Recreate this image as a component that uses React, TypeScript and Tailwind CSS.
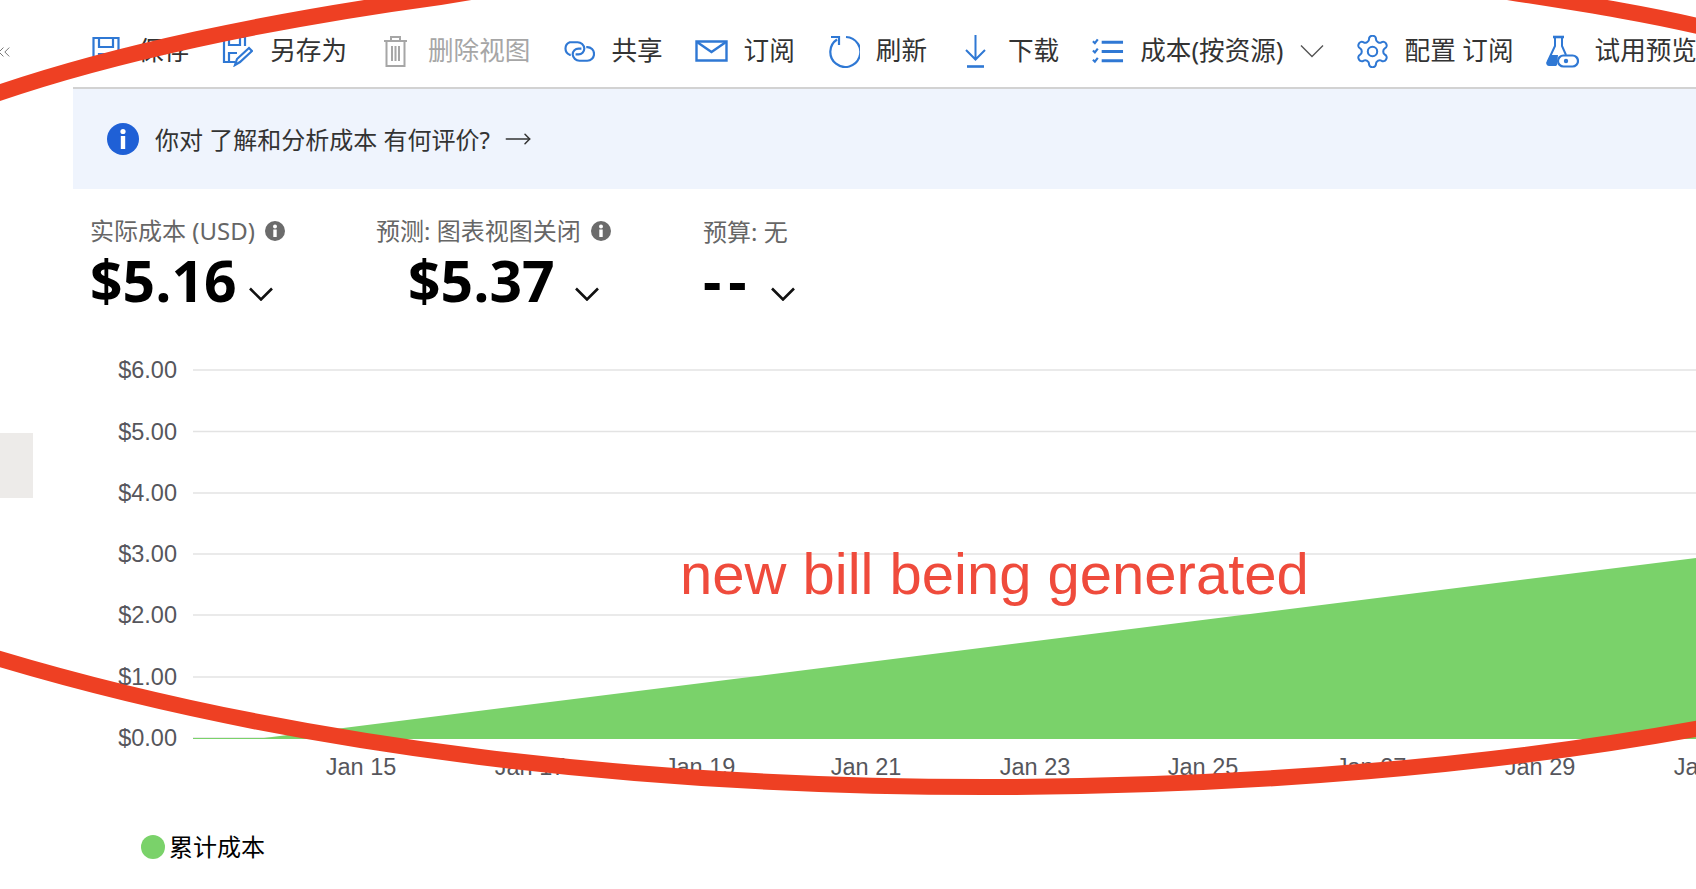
import React from 'react';
import { ChevronsLeft, MoveRight } from 'lucide-react';

const blue = '#2f78d4';

function SaveIcon() {
  return (
    <svg width="28" height="32" viewBox="0 0 28 32" fill="none" stroke={blue} strokeWidth="2.2">
      <path d="M1.5 3h25v26h-25z" />
      <path d="M7 3v9h14V3" />
      <path d="M7 29v-10h14v10" />
    </svg>
  );
}

function SaveAsIcon() {
  return (
    <svg width="31" height="32" viewBox="0 0 31 32" fill="none" stroke={blue} strokeWidth="2.2">
      <path d="M13 27H2V2h21v9" />
      <path d="M7 2v8h11V2" />
      <path d="M7 27v-9h8" />
      <path d="M13 30l2-6 12-11 3 3-12 11z" />
    </svg>
  );
}

function TrashIcon() {
  return (
    <svg width="25" height="33" viewBox="0 0 25 33" fill="none" stroke="#a6a6a6" strokeWidth="2">
      <path d="M1 6h23M8 6V2h9v4M3.5 6v25h18V6M9 11v15M12.5 11v15M16 11v15" />
    </svg>
  );
}

function LinkIcon() {
  return (
    <svg width="34" height="26" viewBox="0 0 34 26" fill="none" stroke={blue} strokeWidth="2.2">
      <path d="M9 17H8A7 7 0 0 1 8 4h8a7 7 0 0 1 7 6.5 6 6 0 0 1-6 6h-3" />
      <path d="M25 9h1a7 7 0 0 1 0 14h-8a7 7 0 0 1-7-6.5 6 6 0 0 1 6-6h3" />
    </svg>
  );
}

function MailIcon() {
  return (
    <svg width="33" height="22" viewBox="0 0 33 22" fill="none" stroke={blue} strokeWidth="2.4">
      <path d="M1.5 1.5h30v19h-30z" />
      <path d="M2 2l14.500 10L31 2" />
    </svg>
  );
}

function RefreshIcon() {
  return (
    <svg width="33" height="34" viewBox="0 0 33 34" fill="none" stroke={blue} strokeWidth="2.2">
      <path d="M10 5.500A15 15 0 1 0 19 3" />
      <path d="M4 3h8v8" />
    </svg>
  );
}

function DownloadIcon() {
  return (
    <svg width="23" height="34" viewBox="0 0 23 34" fill="none" stroke={blue} strokeWidth="2">
      <path d="M11.500 1v24M2 16l9.500 9.500L21 16" />
      <path strokeWidth="2.600" d="M3 32.500h17" />
    </svg>
  );
}

function ListIcon() {
  return (
    <svg width="34" height="28" viewBox="0 0 34 28" fill="none" stroke={blue}>
      <path strokeWidth="3" d="M11 5h22M11 14.500h22M11 24h22" />
      <path strokeWidth="2.200" d="M2 4l2 2 3-4M2 13.500l2 2 3-4M2 23l2 2 3-4" />
    </svg>
  );
}

function GearIcon() {
  return (
    <svg width="33" height="33" viewBox="1.500 1.500 21 21" fill="none" stroke={blue} strokeWidth="1.300" strokeLinejoin="round">
      <path d="M12.220 2h-.440a2 2 0 0 0-2 2v.180a2 2 0 0 1-1 1.730l-.430.250a2 2 0 0 1-2 0l-.150-.080a2 2 0 0 0-2.730.730l-.220.380a2 2 0 0 0 .730 2.730l.150.100a2 2 0 0 1 1 1.720v.510a2 2 0 0 1-1 1.740l-.150.090a2 2 0 0 0-.730 2.730l.220.380a2 2 0 0 0 2.730.730l.150-.080a2 2 0 0 1 2 0l.430.250a2 2 0 0 1 1 1.730V20a2 2 0 0 0 2 2h.440a2 2 0 0 0 2-2v-.180a2 2 0 0 1 1-1.730l.430-.250a2 2 0 0 1 2 0l.150.080a2 2 0 0 0 2.730-.730l.220-.390a2 2 0 0 0-.730-2.730l-.150-.080a2 2 0 0 1-1-1.740v-.500a2 2 0 0 1 1-1.740l.150-.090a2 2 0 0 0 .730-2.730l-.220-.380a2 2 0 0 0-2.730-.730l-.150.080a2 2 0 0 1-2 0l-.430-.250a2 2 0 0 1-1-1.730V4a2 2 0 0 0-2-2z" />
      <circle cx="12" cy="12" r="3" />
    </svg>
  );
}

function FlaskIcon() {
  return (
    <svg width="33" height="33" viewBox="0 0 33 33" fill="none" stroke={blue} strokeWidth="2">
      <path strokeWidth="2.600" d="M7 2h11" />
      <path d="M9 2v9L1.500 27a2 2 0 0 0 2 3h7M16 2v9l4 9" />
      <path fill={blue} stroke="none" d="M5 20h7l-1 10H3a2.500 2.500 0 0 1-2-3z" />
      <rect x="12" y="20.500" width="20" height="11" rx="5.500" fill="#fff" strokeWidth="2.200" />
      <circle cx="20" cy="26" r="2.200" fill={blue} stroke="none" />
    </svg>
  );
}

function InfoDot() {
  return (
    <svg width="20" height="20" viewBox="0 0 20 20" className="shrink-0">
      <circle cx="10" cy="10" r="10" fill="#6b6b6b" />
      <rect x="8.300" y="8.500" width="3.400" height="7.500" fill="#fff" />
      <circle cx="10" cy="5.500" r="2" fill="#fff" />
    </svg>
  );
}

// wide thin chevron used in the toolbar and next to the totals
function Caret({ color, weight }: { color: string; weight: number }) {
  return (
    <svg width="24" height="14" viewBox="0 0 24 14" fill="none" stroke={color} strokeWidth={weight} className="shrink-0">
      <path d="M1 1.500l11 11 11-11" />
    </svg>
  );
}

const toolbarItems = [
  { label: '保存', icon: <SaveIcon /> },
  { label: '另存为', icon: <SaveAsIcon /> },
  { label: '删除视图', icon: <TrashIcon />, disabled: true },
  { label: '共享', icon: <LinkIcon /> },
  { label: '订阅', icon: <MailIcon /> },
  { label: '刷新', icon: <RefreshIcon /> },
  { label: '下载', icon: <DownloadIcon /> },
  { label: '成本(按资源)', icon: <ListIcon />, caret: true },
  { label: '配置 订阅', icon: <GearIcon /> },
  { label: '试用预览', icon: <FlaskIcon /> },
];

const yTicks = [
  { label: '$6.00', y: 370 },
  { label: '$5.00', y: 431.5 },
  { label: '$4.00', y: 493 },
  { label: '$3.00', y: 554 },
  { label: '$2.00', y: 615 },
  { label: '$1.00', y: 677 },
  { label: '$0.00', y: 738 },
];

const xTicks = [
  { label: 'Jan 15', x: 361 },
  { label: 'Jan 17', x: 530 },
  { label: 'Jan 19', x: 700 },
  { label: 'Jan 21', x: 866 },
  { label: 'Jan 23', x: 1035 },
  { label: 'Jan 25', x: 1203 },
  { label: 'Jan 27', x: 1371 },
  { label: 'Jan 29', x: 1540 },
  { label: 'Jan 31', x: 1709 },
];

function Chart() {
  return (
    <svg width="1623" height="440" viewBox="73 350 1623 440" className="block">
      {yTicks.map((t) => (
        <g key={t.label}>
          <line x1="193" x2="1696" y1={t.y} y2={t.y} stroke="#e3e3e3" strokeWidth="1.500" />
          <text x="177" y={t.y + 8} textAnchor="end" fill="#56565c" fontSize="23.500" fontFamily="'Liberation Sans', sans-serif">
            {t.label}
          </text>
        </g>
      ))}
      <path d="M193 738L264 738L1696 558V739H193Z" fill="#7ad26a" />
      {xTicks.map((t) => (
        <text key={t.label} x={t.x} y="775" textAnchor="middle" fill="#56565c" fontSize="23.500" fontFamily="'Liberation Sans', sans-serif">
          {t.label}
        </text>
      ))}
    </svg>
  );
}

export default function App() {
  const cjk = "font-['Noto_Sans','Noto_Sans_CJK_SC',sans-serif]";
  return (
    <div className={`relative flex h-[889px] w-[1696px] overflow-hidden bg-white ${cjk}`}>
      {/* left nav rail, cut off in the screenshot */}
      <div className="w-[73px] shrink-0">
        <ChevronsLeft className="mt-[42px] -ml-[6px] h-5 w-5 text-[#777]" strokeWidth={1.2} />
        <div className="mt-[371px] h-[65px] w-[33px] bg-[#edebe9]" />
      </div>

      <div className="min-w-0 flex-1">
        <div className="flex h-[89px] items-center gap-[32px] overflow-hidden whitespace-nowrap border-b-2 border-[#d2d2d2] pl-[16px] pt-[15px]">
          {toolbarItems.map((item) => (
            <div key={item.label} className="flex shrink-0 items-center gap-[16px]">
              <span className="flex w-[33px] justify-center">{item.icon}</span>
              <span className={`text-[25.6px] leading-[34px] ${item.disabled ? 'text-[#a6a6a6]' : 'text-[#333]'}`}>
                {item.label}
              </span>
              {item.caret && <Caret color="#555" weight={1.4} />}
            </div>
          ))}
        </div>

        <div className="flex h-[100px] items-center bg-[#eff4fd] pl-[34px]">
          <svg width="32" height="32" viewBox="0 0 32 32" className="shrink-0">
            <circle cx="16" cy="16" r="16" fill="#1f60d6" />
            <rect x="13.800" y="13" width="4.400" height="13" fill="#fff" />
            <circle cx="16" cy="8.500" r="2.600" fill="#fff" />
          </svg>
          <span className="ml-[16px] pt-[2px] text-[24px] text-[#333]">你对 了解和分析成本 有何评价?</span>
          <MoveRight className="ml-[14px] h-[28px] w-[28px] text-[#333]" strokeWidth={1.3} />
        </div>

        <div className="flex h-[161px] items-start pl-[17px] pt-[27px]">
          <div className="w-[286px]">
            <div className="flex items-center gap-[10px] text-[24px] leading-[30px] text-[#666]">
              实际成本 (USD) <InfoDot />
            </div>
            <div className="flex items-center pt-[1px] text-black">
              <span className="text-[57px] leading-[66px] font-bold font-['Open_Sans',sans-serif]">$5.16</span>
              <span className="mt-[28px] ml-[12px]"><Caret color="#111" weight={2.6} /></span>
            </div>
          </div>
          <div className="w-[327px]">
            <div className="flex items-center gap-[10px] text-[24px] leading-[30px] text-[#666]">
              预测: 图表视图关闭 <InfoDot />
            </div>
            <div className="flex items-center pl-[32px] pt-[1px] text-black">
              <span className="text-[57px] leading-[66px] font-bold font-['Open_Sans',sans-serif]">$5.37</span>
              <span className="mt-[28px] ml-[20px]"><Caret color="#111" weight={2.6} /></span>
            </div>
          </div>
          <div>
            <div className="pt-[1px] text-[24px] leading-[30px] text-[#666]">预算: 无</div>
            <div className="flex items-center text-black">
              <span className="text-[57px] leading-[66px] font-bold tracking-[7px] font-['Open_Sans',sans-serif]">--</span>
              <span className="mt-[28px] ml-[17px]"><Caret color="#111" weight={2.6} /></span>
            </div>
          </div>
        </div>

        <Chart />

        <div className="mt-[41px] flex items-center pl-[68px]">
          <span className="h-[24px] w-[24px] rounded-full bg-[#7ad26a]" />
          <span className="ml-[4px] text-[24px] leading-[32px] text-black">累计成本</span>
        </div>
      </div>

      {/* hand-drawn annotation on top of the screenshot */}
      <svg width="1696" height="889" viewBox="0 0 1696 889" fill="none" stroke="#ee4023" strokeWidth="16" className="pointer-events-none absolute left-0 top-0">
        <path d="M-10 96C110 54 270 20 440 -3L520 -16" />
        <path d="M1495 -10C1570 2 1640 12 1706 28" />
        <path d="M-10 656C300 750 650 787 985 787C1250 787 1500 765 1706 727" />
      </svg>
      <div className="absolute left-[680px] top-[540px] whitespace-nowrap text-[58px] leading-[68px] text-[#ef4b3c] font-['Liberation_Sans',sans-serif]">
        new bill being generated
      </div>
    </div>
  );
}
